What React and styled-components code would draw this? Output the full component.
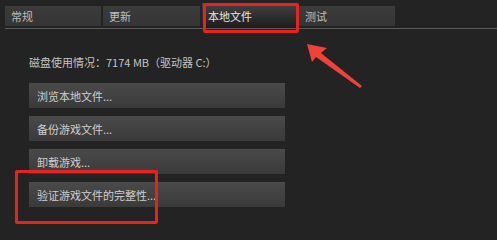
import React from "react";
import styled, { createGlobalStyle } from "styled-components";

const Global = createGlobalStyle`
  html, body {
    margin: 0;
    padding: 0;
    background: #232323;
  }
  body {
    font-family: "Noto Sans CJK SC", "Liberation Sans", sans-serif;
    color: #c6c6c6;
  }
`;

const Page = styled.div`
  position: relative;
  width: 497px;
  height: 231px;
  overflow: hidden;
  background: #232323;
`;

const TabBar = styled.div`
  display: flex;
  gap: 2px;
  margin-left: 5px;
  padding-top: 6px;
  border-bottom: 1px solid #5a5a5a;
  height: 22px;
  box-sizing: content-box;
`;

const Tab = styled.div`
  width: ${(p) => p.w}px;
  height: ${(p) => (p.active ? 25 : 20)}px;
  margin-top: ${(p) => (p.active ? -3 : 0)}px;
  box-sizing: border-box;
  padding-left: 6px;
  display: flex;
  align-items: center;
  font-size: 11px;
  color: ${(p) => (p.active ? "#e6e6e6" : "#bdbdbd")};
  background: ${(p) =>
    p.active
      ? "linear-gradient(#434343, #1c1c1c)"
      : "linear-gradient(#3b3b3b, #353535)"};
  position: relative;
  z-index: 1;
`;

const Content = styled.div`
  padding: 26px 0 0 29px;
  display: flex;
  flex-direction: column;
  gap: 8px;
`;

const Usage = styled.div`
  font-size: 11px;
  line-height: 14px;
  height: 14px;
  margin-bottom: 6px;
  color: #c2c2c2;
`;

const Button = styled.div`
  width: 256px;
  height: 25px;
  box-sizing: border-box;
  padding-left: 8px;
  display: flex;
  align-items: center;
  font-size: 11px;
  color: #cfcfcf;
  background: linear-gradient(#4a4a4a, #3a3a3a);
`;

const Mark = styled.div`
  position: absolute;
  left: ${(p) => p.x}px;
  top: ${(p) => p.y}px;
  width: ${(p) => p.w}px;
  height: ${(p) => p.h}px;
  box-sizing: border-box;
  border: 3px solid #e8231f;
  border-radius: 2px;
  z-index: 2;
`;

const Overlay = styled.svg`
  position: absolute;
  left: 0;
  top: 0;
  z-index: 3;
`;

const tabs = [
  { label: "常规", w: 96 },
  { label: "更新", w: 97 },
  { label: "本地文件", w: 95, active: true },
  { label: "测试", w: 96 },
];

const actions = [
  "浏览本地文件...",
  "备份游戏文件...",
  "卸载游戏...",
  "验证游戏文件的完整性...",
];

export default function App() {
  return (
    <Page>
      <Global />
      <TabBar>
        {tabs.map((t) => (
          <Tab key={t.label} w={t.w} active={t.active}>
            {t.label}
          </Tab>
        ))}
      </TabBar>
      <Content>
        <Usage>磁盘使用情况：7174 MB（驱动器 C:）</Usage>
        {actions.map((a) => (
          <Button key={a}>{a}</Button>
        ))}
      </Content>
      <Mark x={203} y={3} w={96} h={30} />
      <Mark x={15} y={170} w={143} h={54} />
      <Overlay width="497" height="231" viewBox="0 0 497 231">
        <polygon
          points="307,44 327,48 321,53 362,86 360,88 316,57 312,62"
          fill="#f0413b"
        />
      </Overlay>
    </Page>
  );
}
